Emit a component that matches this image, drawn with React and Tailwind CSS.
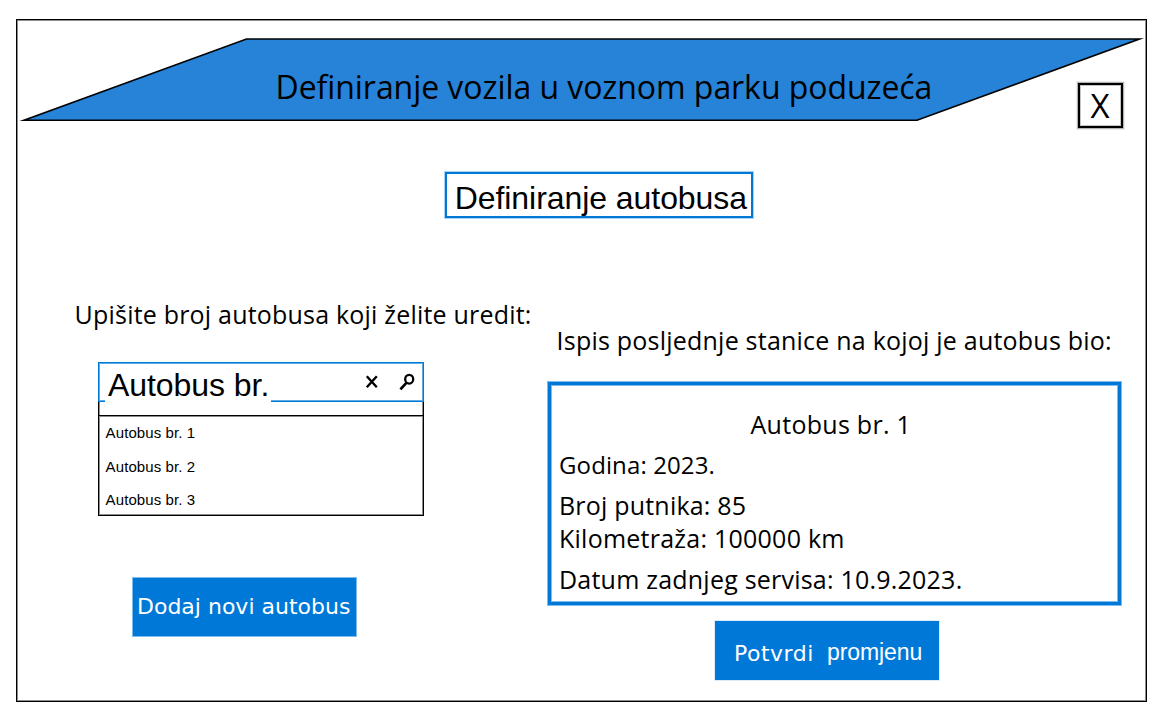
const buses = [
  { name: "Autobus br. 1", space: "mt-2" },
  { name: "Autobus br. 2", space: "mt-[17px]" },
  { name: "Autobus br. 3", space: "mt-4" },
];

const details = [
  { text: "Godina: 2023.", style: "mt-[9px] mb-px text-[24px] tracking-[0.12px]" },
  { text: "Broj putnika: 85", style: "mt-2 tracking-[0.2px]" },
  { text: "Kilometraža: 100000 km", style: "mt-px tracking-[0.24px]" },
  { text: "Datum zadnjeg servisa: 10.9.2023.", style: "mt-[9px] tracking-[0.22px]" },
];

function Header() {
  return (
    <header className="grid h-[110px] shrink-0 grid-cols-1 *:col-start-1 *:row-start-1">
      <svg width="1129" height="110" viewBox="0 0 1129 110" aria-hidden="true">
        <polygon
          points="229.5,19 1122.5,19 900,100.3 7,100.3"
          fill="#2683d7"
          stroke="#000"
          strokeWidth="1.6"
          strokeMiterlimit="10"
        />
      </svg>
      <h1 className="mt-[45px] ml-[258.5px] text-[32px] leading-[43px] tracking-[-0.06px] whitespace-nowrap">
        Definiranje vozila u voznom parku poduzeća
      </h1>
      <button className="mt-[63px] ml-[1061px] flex size-[45px] items-center justify-center border-2 border-black pr-px text-[33px] leading-[43px] shadow-[0_0_0_1px_#b4b4b4,0_0_0_2px_#ececec,inset_0_0_0_1px_#c4c4c4]">
        X
      </button>
    </header>
  );
}

function BusSearch() {
  return (
    <div className="mt-8 ml-[81px] w-[326px] font-['Liberation_Sans',Arial,sans-serif]">
      <div className="flex h-10 items-start border border-[#0078d7] shadow-[inset_0_0_0_1px_#5fabe6]">
        <span className="mt-1 ml-1.5 h-9 w-[166px] shrink-0 bg-white pl-[3px] text-[32px] leading-9 tracking-[-0.06px] whitespace-nowrap">
          Autobus br.
        </span>
        <svg
          className="mt-[7px] ml-[93px] shrink-0"
          width="56"
          height="24"
          viewBox="0 0 56 24"
          fill="none"
          stroke="#000"
          aria-hidden="true"
        >
          <path d="M2.8 6.2 12.8 17.2M12.8 6.2 2.8 17.2" strokeWidth="2.4" />
          <ellipse cx="45.2" cy="9.2" rx="4" ry="4.4" strokeWidth="2.3" />
          <path d="M42.6 12.6 36.4 19.4" strokeWidth="2.7" />
        </svg>
      </div>
      <div className="h-[13px] border-x border-black shadow-[inset_1px_0_0_#8c8c8c,inset_-1px_0_0_#8c8c8c]" />
      <ul className="flex h-[101px] flex-col border border-black pl-[6.6px] text-[15px] leading-[17px] tracking-[0.1px] shadow-[inset_0_0_0_1px_#8c8c8c]">
        {buses.map((bus) => (
          <li key={bus.name} className={bus.space}>
            {bus.name}
          </li>
        ))}
      </ul>
    </div>
  );
}

export default function App() {
  return (
    <div className="h-[725px] w-[1164px] overflow-hidden bg-white pt-[19px] pl-4 font-['Open_Sans',sans-serif] text-black">
      <main className="flex h-[683px] w-[1131px] flex-col border border-black shadow-[inset_0_0_0_1px_#8c8c8c]">
        <Header />

        <h2 className="mt-[42px] ml-[428px] h-[46px] w-[308px] shrink-0 border-2 border-[#0078d7] pt-1.5 pl-[7.7px] font-['Liberation_Sans',Arial,sans-serif] text-[32px] leading-9 tracking-[-0.06px] whitespace-nowrap shadow-[0_0_0_1px_#a9d2f3]">
          Definiranje autobusa
        </h2>

        <div className="flex">
          <section className="flex w-[531px] shrink-0 flex-col pt-20">
            <p className="ml-[57.6px] text-[25px] leading-8 tracking-[0.2px] whitespace-nowrap">
              Upišite broj autobusa koji želite uredit:
            </p>
            <BusSearch />
            <button className="mt-[61px] ml-[115px] flex h-[60px] w-[225px] items-start border border-[#7fbbeb] bg-[#0078d7] pt-4 pl-[4px] font-['DejaVu_Sans',sans-serif] text-[22px] leading-[25px] whitespace-nowrap text-white">
              Dodaj novi autobus
            </button>
          </section>

          <section className="flex w-[573px] shrink-0 flex-col pt-[106px]">
            <p className="ml-[8.6px] text-[25px] leading-8 tracking-[0.22px] whitespace-nowrap">
              Ispis posljednje stanice na kojoj je autobus bio:
            </p>
            <div className="mt-[26px] h-[223px] border-[3px] border-[#0078d7] pl-2 text-[25px] leading-8 whitespace-nowrap shadow-[0_0_0_1px_#7fbbeb,inset_0_0_0_1px_#7fbbeb]">
              <h3 className="mt-[23px] ml-[191.5px] tracking-[0.28px]">Autobus br. 1</h3>
              {details.map((item) => (
                <p key={item.text} className={item.style}>
                  {item.text}
                </p>
              ))}
            </div>
            <button className="mt-4 ml-[167px] flex h-[59px] w-[224px] items-start bg-[#0078d7] pl-[19px] whitespace-nowrap text-white shadow-[0_0_0_1px_#dcebf8]">
              <span className="mt-5 w-[93px] text-left font-['DejaVu_Sans',sans-serif] text-[22px] leading-[25px] tracking-[0.5px]">
                Potvrdi
              </span>
              <span className="mt-[18px] font-['Liberation_Sans',Arial,sans-serif] text-[23px] leading-[26px] tracking-[-0.08px]">
                promjenu
              </span>
            </button>
          </section>
        </div>
      </main>
    </div>
  );
}
